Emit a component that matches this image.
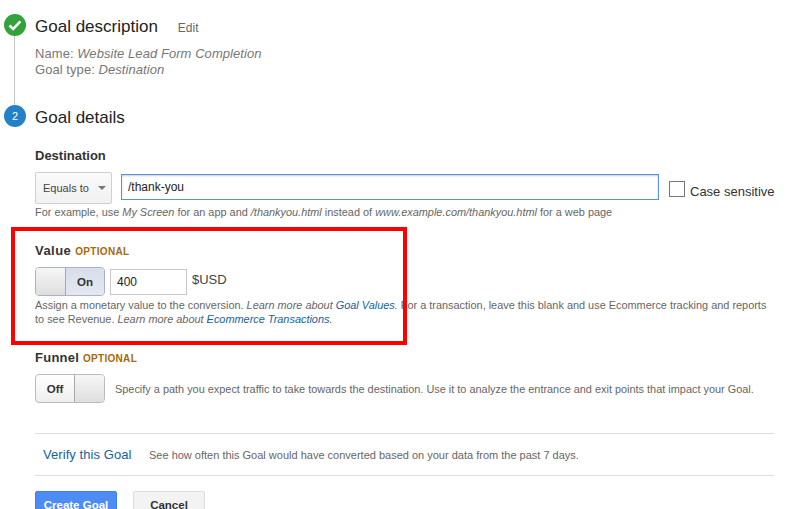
<div class="page">
	<section class="step first">
		<div class="marker done">
			<svg width="22" height="22" viewBox="0 0 22 22"><path d="M5.5 11.5l3.7 3.5 7.2-7.6" fill="none" stroke="#fff" stroke-width="2.6" /></svg>
		</div>
		<div class="head">
			<h2>Goal description</h2>
			<a class="edit" href="#edit">Edit</a>
		</div>
		<div class="summary">
			<div>Name: <em>Website Lead Form Completion</em></div>
			<div>Goal type: <em>Destination</em></div>
		</div>
	</section>

	<section class="step second">
		<div class="marker num">2</div>
		<div class="head">
			<h2>Goal details</h2>
		</div>
	</section>

	<div class="form">
		<h3 class="dest-label">Destination</h3>
		<div class="dest-row">
			<div class="select">Equals to <span class="caret"></span></div>
			<div class="text-input focused">/thank-you</div>
			<span class="checkbox"></span>
			<span class="case">Case sensitive</span>
		</div>
		<p class="hint dest-hint">For example, use <em>My Screen</em> for an app and <em>/thankyou.html</em> instead of <em>www.example.com/thankyou.html</em> for a web page</p>

		<h3 class="value-label">Value <span class="opt">OPTIONAL</span></h3>
		<div class="value-row">
			<div class="toggle on">
				<span class="knob"></span>
				<span class="state">On</span>
			</div>
			<div class="text-input amount">400</div>
			<span class="currency">$USD</span>
		</div>
		<p class="hint value-hint">Assign a monetary value to the conversion. <em>Learn more about</em> <a href="#values"><em>Goal Values</em></a><em>.</em> For a transaction, leave this blank and use Ecommerce tracking and reports<br />to see Revenue. <em>Learn more about</em> <a href="#ecom"><em>Ecommerce Transactions</em></a><em>.</em></p>

		<h3 class="funnel-label">Funnel <span class="opt">OPTIONAL</span></h3>
		<div class="funnel-row">
			<div class="toggle off">
				<span class="state">Off</span>
				<span class="knob"></span>
			</div>
			<p class="hint">Specify a path you expect traffic to take towards the destination. Use it to analyze the entrance and exit points that impact your Goal.</p>
		</div>

		<div class="verify">
			<a href="#verify">Verify this Goal</a>
			<p class="hint">See how often this Goal would have converted based on your data from the past 7 days.</p>
		</div>

		<div class="actions">
			<button class="primary">Create Goal</button>
			<button class="secondary">Cancel</button>
		</div>
	</div>

	<div class="annotation"></div>
</div>

<style>
	:global(body) {
		margin: 0;
		background: #fff;
		overflow: hidden;
	}

	.page {
		position: relative;
		width: 797px;
		height: 509px;
		overflow: hidden;
		font-family: 'Liberation Sans', Arial, sans-serif;
		color: #222;
	}

	.step {
		position: relative;
		padding-left: 35px;
	}

	.first {
		height: 105px;
		padding-top: 16px;
		box-sizing: border-box;
	}

	.second {
		padding-top: 2px;
	}

	.first::before {
		content: '';
		position: absolute;
		left: 14px;
		top: 36px;
		bottom: 0;
		width: 1px;
		background: #c4c4c4;
	}

	.marker {
		position: absolute;
		left: 4px;
		width: 22px;
		height: 22px;
		border-radius: 50%;
		display: flex;
		align-items: center;
		justify-content: center;
		color: #fff;
		font-size: 11px;
	}

	.done {
		top: 14px;
		background: #35a13a;
	}

	.num {
		top: 0;
		background: #2481c8;
	}

	.head {
		display: flex;
		align-items: baseline;
		height: 22px;
	}

	h2 {
		margin: 0;
		font-size: 17px;
		font-weight: 400;
		line-height: 22px;
		color: #222;
	}

	.edit {
		margin-left: 20px;
		font-size: 12px;
		color: #666;
		text-decoration: none;
	}

	.summary {
		margin-top: 8px;
		font-size: 13px;
		line-height: 16px;
		letter-spacing: 0.06px;
		color: #777;
	}

	.form {
		padding: 19px 23px 0 35px;
	}

	h3 {
		margin: 0;
		font-size: 13px;
		line-height: 16px;
		font-weight: 700;
		color: #333;
	}

	.opt {
		font-size: 10px;
		letter-spacing: 0.3px;
		color: #a56a0a;
	}

	.dest-row {
		display: flex;
		align-items: center;
		margin-top: 8px;
		height: 32px;
	}

	.select {
		box-sizing: border-box;
		flex: none;
		width: 77px;
		height: 32px;
		padding-left: 7px;
		display: flex;
		align-items: center;
		font-size: 11px;
		color: #444;
		background: linear-gradient(#fafafa, #f1f1f1);
		border: 1px solid #d0d0d0;
		border-radius: 2px;
	}

	.caret {
		margin-left: 9px;
		border: 4px solid transparent;
		border-top-color: #777;
		border-bottom: 0;
	}

	.text-input {
		box-sizing: border-box;
		flex: none;
		display: flex;
		align-items: center;
		font-size: 12px;
		color: #222;
		background: #fff;
	}

	.focused {
		width: 538px;
		height: 26px;
		margin: -2px 10px 0 9px;
		padding-left: 6px;
		border: 1px solid #5b90ea;
		box-shadow: inset 0 1px 2px rgba(0, 0, 0, 0.2);
	}

	.checkbox {
		box-sizing: border-box;
		flex: none;
		width: 16px;
		height: 16px;
		margin-top: 2px;
		border: 1px solid #777;
	}

	.case {
		margin: 7px 0 0 5px;
		font-size: 13px;
		white-space: nowrap;
		color: #333;
	}

	.hint {
		margin: 0;
		font-size: 10.92px;
		line-height: 14px;
		color: #666;
	}

	.hint a,
	.verify a {
		color: #15629e;
		text-decoration: none;
	}

	.dest-hint {
		margin-top: 1px;
	}

	.value-label {
		margin-top: 24px;
		letter-spacing: 0.45px;
	}

	.funnel-label {
		letter-spacing: 0.25px;
	}

	.value-row {
		display: flex;
		align-items: center;
		margin-top: 7px;
		height: 29px;
	}

	.toggle {
		box-sizing: border-box;
		flex: none;
		display: flex;
		width: 70px;
		height: 29px;
		border: 1px solid #bbb;
		border-radius: 4px;
		overflow: hidden;
		background: linear-gradient(#fff, #eee);
		font-size: 11.5px;
		font-weight: 700;
		color: #333;
	}

	.toggle.on {
		border-color: #aab2c6;
	}

	.knob {
		box-sizing: border-box;
		width: 30px;
		background: linear-gradient(#f6f6f6, #dedede);
	}

	.state {
		flex: 1;
		display: flex;
		align-items: center;
		justify-content: center;
	}

	.on .knob {
		border-right: 1px solid #a8a8a8;
	}

	.on .state {
		background: linear-gradient(#d8deea, #e4e8f0);
	}

	.off .knob {
		border-left: 1px solid #a8a8a8;
	}

	.amount {
		width: 77px;
		height: 26px;
		margin: 0 5px;
		padding-left: 6px;
		border: 1px solid #c6c6c6;
	}

	.currency {
		margin-top: -4px;
		font-size: 13px;
		color: #444;
	}

	.value-hint {
		margin-top: 2px;
	}

	.funnel-label {
		margin-top: 24px;
	}

	.funnel-row {
		display: flex;
		align-items: center;
		gap: 10px;
		margin-top: 7px;
		height: 29px;
	}

	.verify {
		display: flex;
		align-items: center;
		height: 41px;
		margin-top: 30px;
		padding-left: 8px;
		border-top: 1px solid #ddd;
		border-bottom: 1px solid #ddd;
	}

	.verify a {
		width: 106px;
		font-size: 13px;
		letter-spacing: 0.07px;
	}

	.verify .hint {
		font-size: 11px;
	}

	.actions {
		display: flex;
		gap: 16px;
		margin-top: 15px;
	}

	button {
		box-sizing: border-box;
		height: 28px;
		padding: 0;
		font-family: inherit;
		font-size: 11.5px;
		font-weight: 700;
		border-radius: 2px;
	}

	.primary {
		width: 82px;
		color: #fff;
		background: #4d8cf5;
		border: 1px solid #3f7fe6;
	}

	.secondary {
		width: 72px;
		color: #333;
		background: #f3f3f3;
		border: 1px solid #dcdcdc;
	}

	.annotation {
		position: absolute;
		left: 11px;
		top: 227px;
		width: 396px;
		height: 118px;
		box-sizing: border-box;
		border: 4px solid #f00;
	}
</style>
